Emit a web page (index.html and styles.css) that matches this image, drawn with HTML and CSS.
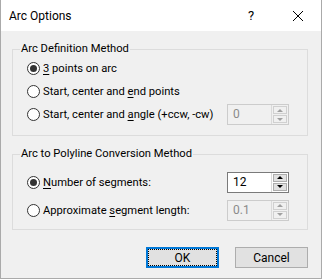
FILE: index.html
```html
<!DOCTYPE html>
<html lang="en">
<head>
    <meta charset="UTF-8">
    <title>Arc Options</title>
    <link rel="stylesheet" href="styles.css">
</head>
<body>
    <div class="window">
        <div class="titlebar">
            <span class="title">Arc Options</span>
            <span class="help">?</span>
            <span class="close">
                <svg width="12" height="12" viewBox="0 0 12 12"><path d="M1 1L11 11M11 1L1 11" stroke="#000" stroke-width="1"/></svg>
            </span>
        </div>

        <div class="content">
            <fieldset class="group">
                <legend>Arc Definition Method</legend>
                <div class="row">
                    <span class="radio checked"></span>
                    <span class="label"><u>3</u> points on arc</span>
                </div>
                <div class="row">
                    <span class="radio"></span>
                    <span class="label">Start, center and <u>e</u>nd points</span>
                </div>
                <div class="row">
                    <span class="radio"></span>
                    <span class="label">Start, center and <u>a</u>ngle (+ccw, -cw)</span>
                    <div class="spin disabled">
                        <span class="value">0</span>
                        <div class="arrows">
                            <span class="arrow up"></span>
                            <span class="arrow down"></span>
                        </div>
                    </div>
                </div>
            </fieldset>

            <fieldset class="group second">
                <legend>Arc to Polyline Conversion Method</legend>
                <div class="row tall">
                    <span class="radio checked"></span>
                    <span class="label"><u>N</u>umber of segments:</span>
                    <div class="spin">
                        <span class="value">12</span>
                        <div class="arrows">
                            <span class="arrow up"></span>
                            <span class="arrow down"></span>
                        </div>
                    </div>
                </div>
                <div class="row tall">
                    <span class="radio"></span>
                    <span class="label">Approximate <u>s</u>egment length:</span>
                    <div class="spin disabled">
                        <span class="value">0.1</span>
                        <div class="arrows">
                            <span class="arrow up"></span>
                            <span class="arrow down"></span>
                        </div>
                    </div>
                </div>
            </fieldset>

            <div class="buttons">
                <button class="btn default"><span>OK</span></button>
                <button class="btn">Cancel</button>
            </div>
        </div>
    </div>
</body>
</html>
```

FILE: styles.css
```css
/* Dialog window */
body {
    margin: 0;
    font-family: "Segoe UI", Roboto, "Noto Sans", sans-serif;
    font-size: 11.2px;
    color: #000;
    background: #fff;
}

.window {
    width: 322px;
    height: 279px;
    box-sizing: border-box;
    border: 1px solid #aaaaaa;
    border-top: none;
    background-color: #f0f0f0;
}

.titlebar {
    height: 31px;
    background-color: #fff;
    display: flex;
    align-items: center;
    padding-left: 8px;
}

.title {
    flex: 1;
    font-size: 12px;
}

.help {
    width: 44px;
    margin-right: 2px;
    text-align: center;
    font-size: 13px;
}

.close {
    width: 46px;
    display: flex;
    justify-content: center;
}

.content {
    padding: 10px 13px 0 11px;
}

/* Group boxes */
.group {
    margin: 0;
    padding: 0 0 9px 14px;
    border: 1px solid #dcdcdc;
    min-width: 0;
}

.group legend {
    margin-left: -7px;
    padding: 0 1px;
    line-height: 16px;
}

.group.second {
    margin-top: 10px;
    padding-top: 9px;
    padding-bottom: 8px;
}

.row {
    height: 23px;
    display: flex;
    align-items: center;
}

.row.tall {
    height: 22px;
}

.row.tall + .row.tall {
    margin-top: 6px;
}

.label {
    flex: 1;
    min-width: 0;
    margin-left: 3px;
    white-space: nowrap;
}

u {
    text-decoration-thickness: 1px;
    text-underline-offset: 2px;
}

/* Radio buttons */
.radio {
    flex: none;
    width: 13px;
    height: 13px;
    box-sizing: border-box;
    border: 1px solid #333;
    border-radius: 50%;
    background: #fff;
    display: flex;
    align-items: center;
    justify-content: center;
}

.radio.checked::after {
    content: "";
    width: 7px;
    height: 7px;
    border-radius: 50%;
    background: #333;
}

/* Spin boxes */
.spin {
    flex: none;
    width: 62px;
    height: 21px;
    box-sizing: border-box;
    border: 1px solid #7a7a7a;
    background: #fff;
    display: flex;
    margin-right: 18px;
}

.spin .value {
    flex: 1;
    padding-left: 5px;
    line-height: 19px;
    font-size: 12px;
}

.spin.disabled {
    border-color: #cccccc;
    background: #f0f0f0;
    color: #8a8a8a;
}

.arrows {
    width: 17px;
    display: flex;
    flex-direction: column;
    gap: 1px;
    padding: 1px;
    box-sizing: border-box;
    background: #fff;
    border-left: 1px solid #dadada;
}

.spin.disabled .arrows {
    background: #f0f0f0;
}

.arrow {
    flex: 1;
    border: 1px solid #adadad;
    background: #e1e1e1;
    display: flex;
    align-items: center;
    justify-content: center;
}

.spin.disabled .arrow {
    border-color: #d0d0d0;
    background: #f0f0f0;
}

.arrow::after {
    content: "";
    border-left: 3px solid transparent;
    border-right: 3px solid transparent;
}

.arrow.up::after {
    border-bottom: 3px solid #000;
}

.arrow.down::after {
    border-top: 3px solid #000;
}

.spin.disabled .arrow.up::after {
    border-bottom-color: #a0a0a0;
}

.spin.disabled .arrow.down::after {
    border-top-color: #a0a0a0;
}

/* Buttons */
.buttons {
    display: flex;
    justify-content: flex-end;
    gap: 16px;
    margin-top: 17px;
}

.btn {
    width: 73px;
    height: 21px;
    padding: 0;
    font: inherit;
    font-size: 12px;
    color: #000;
    background-color: #e1e1e1;
    border: 1px solid #adadad;
}

.btn.default {
    border: 2px solid #0078d7;
    padding: 1px;
}

.btn.default span {
    display: flex;
    align-items: center;
    justify-content: center;
    height: 100%;
    outline: 1px dotted #000;
}
```
